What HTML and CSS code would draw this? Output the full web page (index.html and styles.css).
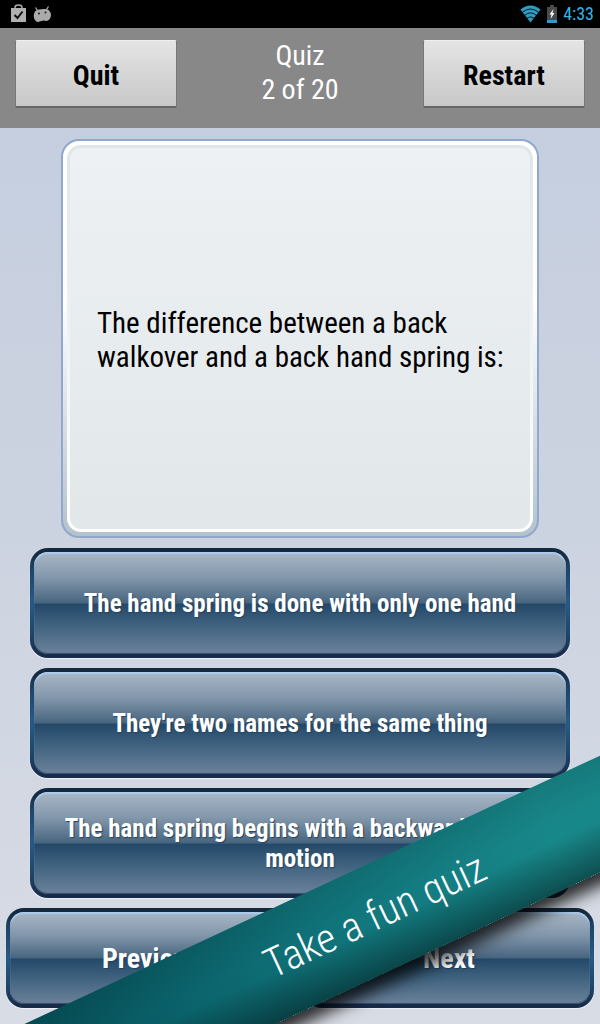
FILE: index.html
```html
<!DOCTYPE html>
<html lang="en">
<head>
  <meta charset="UTF-8">
  <meta name="viewport" content="width=device-width, initial-scale=1.0">
  <title>Quiz</title>
  <link rel="stylesheet" href="styles.css">
</head>
<body>

  <div class="statusbar">
    <svg class="bag" width="17" height="19" viewBox="0 0 17 19">
      <path d="M5 5V3.500Q5 1 8.500 1T12 3.500V5" fill="none" stroke="#aaa" stroke-width="1.500"/>
      <path d="M1 4h15v14H1z" fill="#b0b0b0"/>
      <path d="M4.500 11l3 3 5-6.500" fill="none" stroke="#111" stroke-width="2"/>
    </svg>
    <svg width="19" height="17" viewBox="0 0 19 17">
      <path d="M2.500 1.500l2 3M15.500 .5l-2 3" stroke="#aaa" stroke-width="1.300"/>
      <path d="M3 4.500C5 3 13 2 15.500 4C18 6 18.500 9 17.500 11.500C16.500 14 14 15.500 12 14.800C10 14.200 8 15 6 15.800C4 16.500 3 15.500 2 14C.5 12 0 7 3 4.500z" fill="#aaa"/>
      <circle cx="6" cy="7.500" r="1" fill="#222"/>
      <circle cx="12.500" cy="6.500" r="1" fill="#222"/>
    </svg>
    <span class="spacer"></span>
    <svg width="21" height="18" viewBox="0 0 21 18">
      <path d="M10.500 17.500L.5 4.500Q10.500-3.500 20.500 4.500z" fill="#2f9cc4"/>
      <path d="M2.500 7.200Q10.500.8 18.500 7.200M4.800 10.200Q10.500 5.500 16.200 10.200M7 13.200Q10.500 10.300 14 13.200" fill="none" stroke="#04161d" stroke-width="1"/>
    </svg>
    <svg width="10" height="18" viewBox="0 0 10 18">
      <path d="M3 0h4v2h3v16H0V2h3z" fill="#4a4a4a"/>
      <path d="M0 15h10v3H0z" fill="#2f9cc4"/>
      <path d="M6.500 4L2.500 9.500h2L3.500 14l4-6h-2z" fill="#fff"/>
    </svg>
    <span class="clock">4:33</span>
  </div>

  <header class="topbar">
    <button type="button" class="plain">Quit</button>
    <h1>Quiz<br>2 of 20</h1>
    <button type="button" class="plain">Restart</button>
  </header>

  <main>
    <div class="card">
      <div class="panel">
        <p>The difference between a back walkover and a back hand spring is:</p>
      </div>
    </div>
    <div class="answers">
      <button type="button" class="glossy">The hand spring is done with only one hand</button>
      <button type="button" class="glossy">They're two names for the same thing</button>
      <button type="button" class="glossy">The hand spring begins with a backward rolling motion</button>
    </div>
    <nav>
      <button type="button" class="glossy">Previous</button>
      <button type="button" class="glossy">Next</button>
    </nav>
  </main>

  <div class="overlay">
    <div class="ribbon">Take a fun quiz</div>
  </div>

</body>
</html>
```
FILE: styles.css
```css
* {
  box-sizing: border-box;
}

body {
  margin: 0;
  min-height: 100vh;
  display: flex;
  flex-direction: column;
  position: relative;
  font-family: "Roboto Condensed", Roboto, sans-serif;
  background: linear-gradient(#c3cddf, #ccd3e0 50%, #d8dce5);
}

button {
  font-family: inherit;
  font-weight: bold;
  cursor: pointer;
}

.statusbar {
  display: flex;
  align-items: center;
  gap: 6px;
  height: 28px;
  padding: 0 6px 0 10px;
  background: #000;
}

.bag {
  margin-bottom: 2px;
}

.spacer {
  flex: 1;
}

.clock {
  font-size: 18px;
  line-height: 32px;
  color: #33b5e5;
}

.topbar {
  display: flex;
  justify-content: space-between;
  align-items: flex-start;
  height: 100px;
  padding: 11px 15px;
  background: #888;
}

.topbar h1 {
  margin: 0;
  font-size: 28px;
  font-weight: normal;
  line-height: 34px;
  text-align: center;
  color: #fff;
}

.plain {
  flex: 0 0 162px;
  height: 68px;
  margin-top: 1px;
  padding: 4px 0 0;
  border: 1px solid #777;
  border-top-color: #eee;
  border-bottom: 2px solid #666;
  border-radius: 2px;
  font-size: 28px;
  color: #000;
  background: linear-gradient(#e4e4e4, #c8c8c8);
}

main {
  flex: 1;
  display: flex;
  flex-direction: column;
  gap: 10px;
  padding: 11px 6px 16px;
}

.card {
  flex: 1;
  display: flex;
  margin: 0 55px;
  padding: 4px;
  border: 2px solid #8fa8cb;
  border-radius: 18px;
  background: linear-gradient(#fff 40%, #b4c2cc);
}

.panel {
  flex: 1;
  display: flex;
  align-items: center;
  padding: 2px 24px 0 27px;
  border: 3px solid transparent;
  border-radius: 14px;
  background:
    linear-gradient(#edf1f4, #e2e7ea) padding-box,
    linear-gradient(#dfe6e8, #fff) border-box;
}

.card p {
  margin: 0;
  font-size: 29px;
  line-height: 34px;
  color: #000;
}

.answers {
  display: flex;
  flex-direction: column;
  gap: 10px;
  margin: 0 24px;
}

.glossy {
  min-height: 110px;
  padding: 2px 24px 0;
  border: 4px solid transparent;
  border-radius: 18px;
  font-size: 25px;
  line-height: 30px;
  color: #fff;
  text-shadow: 1px 1px 1px #24425e;
  background:
    linear-gradient(#a9b7c6, #8397ab 25%, #47657f 50%, #244869 51%, #3d607d 70%, #6c829b) padding-box,
    linear-gradient(#14293d 4%, #1d466b 20%, #265a86 50%, #1d4468 80%, #182c4a 97%) border-box;
  box-shadow:
    inset 0 2px 1px #a9cbee,
    inset 0 -1px 1px #3a4a6e,
    0 1px 1px #eef1f6;
}

nav {
  display: flex;
  gap: 8px;
}

nav .glossy {
  flex: 1;
  min-height: 100px;
  font-size: 28px;
}

.overlay {
  position: absolute;
  inset: 0;
  overflow: hidden;
  pointer-events: none;
}

.ribbon {
  position: absolute;
  left: -100px;
  right: -100px;
  bottom: 17px;
  height: 106px;
  padding-left: 168px;
  font-size: 41px;
  font-weight: 300;
  line-height: 100px;
  text-align: center;
  color: #fff;
  background:
    linear-gradient(rgba(0, 0, 0, 0.1), transparent 40%, transparent 55%, rgba(0, 0, 0, 0.42)),
    linear-gradient(to right, #06505a 15%, #10757b 55%, #188789 85%);
  box-shadow: 0 22px 16px -10px rgba(0, 0, 0, 0.8);
  transform: rotate(-25deg);
}
```
